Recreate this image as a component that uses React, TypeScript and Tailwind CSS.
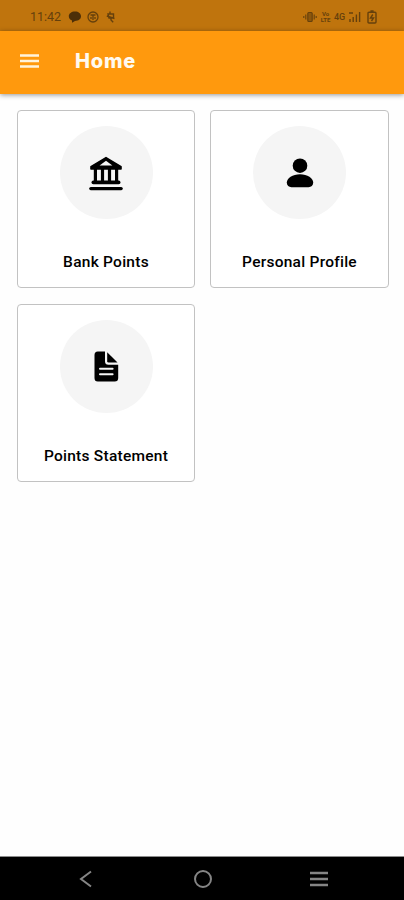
import type { ReactNode } from 'react';

interface MenuItem {
  id: number;
  title: string;
  icon: ReactNode;
}

function BankIcon() {
  return (
    <svg width="36" height="36" viewBox="0 0 36 36" fill="none" stroke="#000" strokeLinecap="round" strokeLinejoin="round">
      <path d="M18 2.6 L33 11.6 V14 H3 V11.6 Z" fill="#000" stroke="#000" strokeWidth="1.6" />
      <path d="M18 5.8 L24.4 10.4 H11.6 Z" fill="#f5f5f5" stroke="none" />
      <path d="M7.4 14 V27 M14.5 14 V27 M21.5 14 V27 M28.6 14 V27" strokeWidth="3.2" />
      <path d="M5.3 27.4 H30.7" strokeWidth="3.6" />
      <path d="M2.8 33.6 H33.2" strokeWidth="3.2" />
    </svg>
  );
}

function PersonIcon() {
  return (
    <svg width="30" height="30" viewBox="0 0 30 30">
      <circle cx="15" cy="7.7" r="7.3" />
      <path d="M15 16.2 C22.4 16.2 28.2 20 28.2 24.6 C28.2 27.8 26.2 29.2 23.6 29.2 H6.4 C3.8 29.2 1.8 27.8 1.8 24.6 C1.8 20 7.6 16.2 15 16.2 Z" />
    </svg>
  );
}

function DocumentIcon() {
  return (
    <svg width="25" height="31" viewBox="0 0 25 31">
      <path d="M3.8 0.5 H11 V10.2 Q11 13.7 14.5 13.7 H24.2 V27 Q24.2 30.5 20.7 30.5 H3.8 Q0.5 30.5 0.5 27 V4 Q0.5 0.5 3.8 0.5 Z" />
      <path d="M13.2 1.2 L23.5 11.6 H14.6 Q13.2 11.6 13.2 10.2 Z" />
      <path d="M6 17.8 H18.6 M6 23.2 H18.6" stroke="#f5f5f5" strokeWidth="2" strokeLinecap="round" />
    </svg>
  );
}

const menuItems: MenuItem[] = [
  { id: 1, title: 'Bank Points', icon: <BankIcon /> },
  { id: 2, title: 'Personal Profile', icon: <PersonIcon /> },
  { id: 3, title: 'Points Statement', icon: <DocumentIcon /> },
];

function StatusBar() {
  return (
    <div className="flex h-[31px] flex-shrink-0 items-center justify-between bg-[#bf740d] pt-0.5 pl-[30px] pr-[27px] text-[#65400c]">
      <div className="flex items-center">
        <span className="w-[38px] text-[12.5px] leading-4">11:42</span>
        <svg width="14" height="12" viewBox="0 0 14 12" fill="#4d2f08">
          <path d="M7 0.5 C10.6 0.5 13 2.6 13 5.3 C13 8 10.6 10 7 10 L4 11.8 V9.5 C1.8 8.7 0.8 7.2 0.8 5.3 C0.8 2.6 3.4 0.5 7 0.5 Z" />
        </svg>
        <svg className="ml-[5px]" width="12" height="12" viewBox="0 0 12 12" fill="none" stroke="currentColor" strokeWidth="1.3">
          <circle cx="6" cy="6" r="5" />
          <path d="M3.5 4 H8.5 M4 6 V8 M6 4.5 V9 M8 6 V8" />
        </svg>
        <svg className="ml-[7px]" width="10" height="12" viewBox="0 0 10 12" fill="none" stroke="currentColor" strokeWidth="1.4">
          <path d="M4 0.5 V2.5 M2 3 H7.5 V7 H3 Z M0.8 5 L8.5 7.5 M5 7 V9 L7.2 11.2" />
        </svg>
      </div>
      <div className="flex items-center">
        <svg width="14" height="12" viewBox="0 0 14 12" fill="none" stroke="currentColor" strokeWidth="1.1">
          <rect x="4.8" y="1.5" width="4.4" height="9" rx="1" fill="currentColor" fillOpacity="0.55" />
          <path d="M2.8 3.5 V8.5 M11.2 3.5 V8.5 M0.8 5 V7 M13.2 5 V7" />
        </svg>
        <span className="ml-[3px] flex w-[11px] flex-col text-center text-[6px] leading-[5.5px] font-bold">
          <span>Vo</span>
          <span>LTE</span>
        </span>
        <span className="ml-[3px] w-[14px] text-[9px] leading-3 font-medium">4G</span>
        <svg width="13" height="12" viewBox="0 0 13 12" fill="none" stroke="currentColor" strokeWidth="1.4">
          <path d="M1 2 H5 M2 11 V8 M5.2 11 V6 M8.4 11 V3.5 M11.6 11 V1" />
        </svg>
        <svg className="ml-[6px]" width="10" height="14" viewBox="0 0 10 14" fill="none" stroke="currentColor" strokeWidth="1.4">
          <path d="M3.4 1 H6.6 M2 2.2 H8 Q9 2.2 9 3.2 V12 Q9 13 8 13 H2 Q1 13 1 12 V3.2 Q1 2.2 2 2.2 Z" />
          <path d="M5.8 4.5 L3.5 8 H6.5 L4.5 11" />
        </svg>
      </div>
    </div>
  );
}

function AppBar() {
  return (
    <header className="z-10 flex h-[63px] flex-shrink-0 items-center bg-[#ff990d] pb-[3px] pl-5 shadow-[0_1px_5px_rgba(0,0,0,0.42)]">
      <svg width="19" height="14" viewBox="0 0 19 14" stroke="#fff3dc" strokeWidth="2.4" aria-label="Menu">
        <path d="M0 1.5 H19 M0 7 H19 M0 12.5 H19" />
      </svg>
      <h1 className="ml-9 font-['Inter',sans-serif] text-[20px] leading-7 font-extrabold tracking-[0.8px] text-[#fffaf0]">Home</h1>
    </header>
  );
}

function MenuCard({ item }: { item: MenuItem }) {
  return (
    <button className="flex h-[178px] flex-col items-center rounded-[4px] border border-[#c2c2c2] bg-white pt-[15px]">
      <span className="flex h-[93px] w-[93px] items-center justify-center rounded-full bg-[#f5f5f5]">{item.icon}</span>
      <span className="mt-[33px] text-[15.5px] leading-5 font-medium tracking-[0.25px] text-black">{item.title}</span>
    </button>
  );
}

function NavigationBar() {
  return (
    <nav className="flex h-[44px] flex-shrink-0 items-center border-t border-[#8c8c8c] bg-black text-[#858585]">
      <svg className="ml-[79px]" width="13" height="18" viewBox="0 0 13 18" fill="none" stroke="currentColor" strokeWidth="2">
        <path d="M12 1.5 L2 9 L12 16.5" />
      </svg>
      <svg className="ml-[101px]" width="20" height="20" viewBox="0 0 20 20" fill="none" stroke="currentColor" strokeWidth="2">
        <circle cx="10" cy="10" r="8" />
      </svg>
      <svg className="ml-[97px]" width="18" height="16" viewBox="0 0 18 16" stroke="currentColor" strokeWidth="2.4">
        <path d="M0 2 H18 M0 8 H18 M0 14 H18" />
      </svg>
    </nav>
  );
}

export default function App() {
  return (
    <div className="flex h-screen flex-col overflow-hidden bg-white font-['Roboto',sans-serif]">
      <StatusBar />
      <AppBar />
      <main className="grid flex-1 grid-cols-[178px_179px] content-start gap-x-[15px] gap-y-4 bg-[#fefefe] pt-4 pl-[17px]">
        {menuItems.map((item) => (
          <MenuCard key={item.id} item={item} />
        ))}
      </main>
      <NavigationBar />
    </div>
  );
}
